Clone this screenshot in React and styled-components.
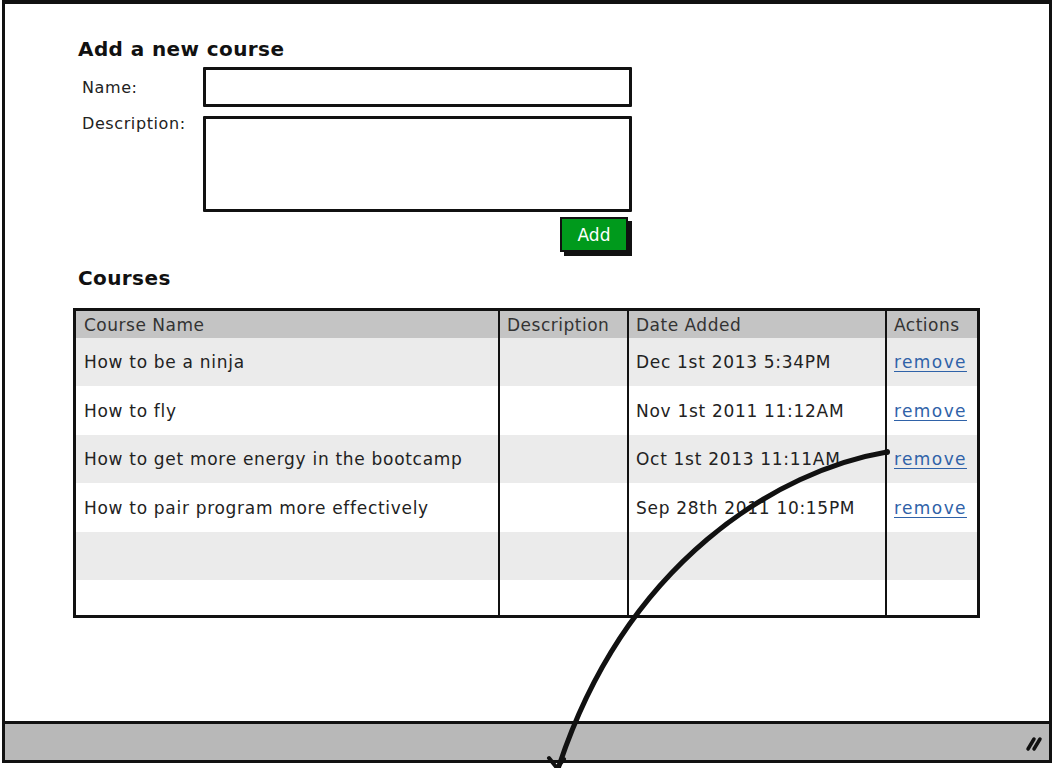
import React from 'react';
import styled, { createGlobalStyle } from 'styled-components';

const GlobalStyle = createGlobalStyle`
  html, body {
    margin: 0;
    padding: 0;
    background: #ffffff;
  }
  body {
    font-family: "DejaVu Sans", "Noto Sans", sans-serif;
    color: #222;
  }
`;

const Screen = styled.div`
  position: relative;
  width: 1053px;
  height: 768px;
  overflow: hidden;
  background: #fff;
`;

const Window = styled.div`
  box-sizing: border-box;
  margin-left: 2px;
  width: 1050px;
  height: 763px;
  border-top: 4px solid #111;
  border-left: 3px solid #111;
  border-right: 3px solid #111;
  display: flex;
  flex-direction: column;
`;

const Content = styled.div`
  flex: 1;
  padding: 31px 0 0 73px;
`;

const Heading = styled.h2`
  margin: 0;
  font-size: 20px;
  line-height: 28px;
  font-weight: 700;
  letter-spacing: 0.4px;
  color: #111;
`;

const Form = styled.div`
  display: grid;
  grid-template-columns: 125px 429px;
  row-gap: 9px;
  margin-top: 4px;
`;

const Label = styled.label`
  margin-top: ${p => p.$top}px;
  padding-left: 4px;
  font-size: 16px;
  line-height: 20px;
  letter-spacing: 0.6px;
  color: #222;
`;

const Input = styled.div`
  box-sizing: border-box;
  height: ${p => p.$h}px;
  border: 3px solid #111;
  border-radius: 1px;
  background: #fff;
`;

const ButtonRow = styled.div`
  grid-column: 2;
  display: flex;
  justify-content: flex-end;
  margin-top: -4px;
`;

const AddButton = styled.button`
  box-sizing: border-box;
  width: 68px;
  height: 35px;
  margin-right: 4px;
  background: #009a1c;
  border: 2px solid #111;
  box-shadow: 4px 4px 0 #111;
  color: #fff;
  font-family: "DejaVu Sans", "Noto Sans", sans-serif;
  font-size: 17px;
  padding: 0;
`;

const CoursesHeading = styled(Heading)`
  margin-top: 12px;
`;

const Table = styled.div`
  box-sizing: border-box;
  margin: 16px 0 0 -5px;
  width: 907px;
  border: 3px solid #111;
  display: grid;
  grid-template-columns: 422px 129px 258px 1fr;
`;

const Cell = styled.div`
  box-sizing: border-box;
  height: ${p => p.$h}px;
  display: flex;
  align-items: center;
  padding-left: ${p => (p.$col === 0 ? 8 : 7)}px;
  background: ${p => p.$bg};
  border-left: ${p => (p.$col === 0 ? 'none' : '2px solid #111')};
  font-size: 17px;
  letter-spacing: ${p => (p.$head ? 0.5 : 0.7)}px;
  color: ${p => (p.$head ? '#333' : '#222')};
  white-space: nowrap;
  overflow: hidden;
`;

const RemoveLink = styled.a`
  color: #2f62a8;
  text-decoration: underline;
  text-underline-offset: 3px;
  font-size: 17px;
  letter-spacing: 1.4px;
  cursor: pointer;
`;

const StatusBar = styled.div`
  box-sizing: border-box;
  height: 42px;
  background: #b8b8b8;
  border-top: 3px solid #111;
  border-bottom: 3px solid #111;
  display: flex;
  justify-content: flex-end;
  align-items: center;
  padding-right: 6px;
`;

const Overlay = styled.svg`
  position: absolute;
  left: 0;
  top: 0;
  pointer-events: none;
`;

const courses = [
  { name: 'How to be a ninja', date: 'Dec 1st 2013 5:34PM' },
  { name: 'How to fly', date: 'Nov 1st 2011 11:12AM' },
  { name: 'How to get more energy in the bootcamp', date: 'Oct 1st 2013 11:11AM' },
  { name: 'How to pair program more effectively', date: 'Sep 28th 2011 10:15PM' },
  null,
  null,
];

const rowHeights = [48, 49, 48, 49, 48, 35];

function Grip() {
  return (
    <svg width="24" height="20" viewBox="0 0 24 20">
      <path d="M9 17 L15 7" stroke="#111" strokeWidth="3.5" strokeLinecap="round" />
      <path d="M15 17 L21 7" stroke="#111" strokeWidth="3.5" strokeLinecap="round" />
    </svg>
  );
}

export default function App() {
  const headBg = '#c4c4c4';
  return (
    <Screen>
      <GlobalStyle />
      <Window>
        <Content>
          <Heading>Add a new course</Heading>
          <Form>
            <Label $top={11}>Name:</Label>
            <Input $h={40} />
            <Label $top={-2}>Description:</Label>
            <Input $h={96} />
            <ButtonRow>
              <AddButton>Add</AddButton>
            </ButtonRow>
          </Form>
          <CoursesHeading>Courses</CoursesHeading>
          <Table>
            <Cell $col={0} $h={27} $bg={headBg} $head>Course Name</Cell>
            <Cell $col={1} $h={27} $bg={headBg} $head>Description</Cell>
            <Cell $col={2} $h={27} $bg={headBg} $head>Date Added</Cell>
            <Cell $col={3} $h={27} $bg={headBg} $head>Actions</Cell>
            {courses.map((c, i) => {
              const bg = i % 2 === 0 ? '#ebebeb' : '#ffffff';
              const h = rowHeights[i];
              return (
                <React.Fragment key={i}>
                  <Cell $col={0} $h={h} $bg={bg}>{c ? c.name : ''}</Cell>
                  <Cell $col={1} $h={h} $bg={bg} />
                  <Cell $col={2} $h={h} $bg={bg}>{c ? c.date : ''}</Cell>
                  <Cell $col={3} $h={h} $bg={bg}>
                    {c && <RemoveLink>remove</RemoveLink>}
                  </Cell>
                </React.Fragment>
              );
            })}
          </Table>
        </Content>
        <StatusBar>
          <Grip />
        </StatusBar>
      </Window>
      <Overlay width="1053" height="768" viewBox="0 0 1053 768">
        <path
          d="M887 452 C 780 470, 625 560, 557 772"
          fill="none"
          stroke="#111"
          strokeWidth="5"
          strokeLinecap="round"
        />
        <circle cx="887" cy="452" r="3" fill="#111" />
        <path d="M549 758 L557 768 L564 759" fill="none" stroke="#111" strokeWidth="4" strokeLinecap="round" />
      </Overlay>
    </Screen>
  );
}
